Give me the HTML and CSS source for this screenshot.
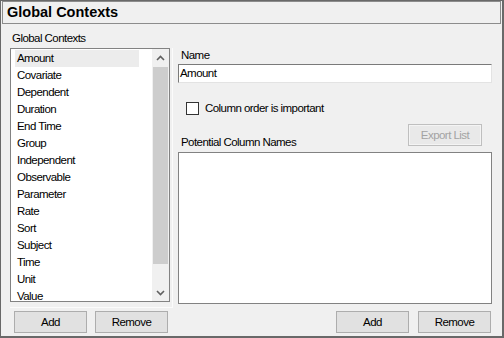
FILE: index.html
```html
<!DOCTYPE html>
<html>
<head>
<meta charset="utf-8">
<link rel="stylesheet" href="styles.css">
</head>
<body>
<div class="window">
  <div class="titlebar">Global Contexts</div>
  <div class="content">
    <div class="leftpane">
      <div class="label left-label">Global Contexts</div>
      <div class="listwrap">
        <div class="listbox">
          <div class="items">
            <div class="item selected">Amount</div>
            <div class="item">Covariate</div>
            <div class="item">Dependent</div>
            <div class="item">Duration</div>
            <div class="item">End Time</div>
            <div class="item">Group</div>
            <div class="item">Independent</div>
            <div class="item">Observable</div>
            <div class="item">Parameter</div>
            <div class="item">Rate</div>
            <div class="item">Sort</div>
            <div class="item">Subject</div>
            <div class="item">Time</div>
            <div class="item">Unit</div>
            <div class="item">Value</div>
          </div>
          <div class="scrollbar">
            <div class="arrow">
              <svg width="9" height="6" viewBox="0 0 9 6"><path d="M1 5 L4.5 1.5 L8 5" fill="none" stroke="#606060" stroke-width="1.6"/></svg>
            </div>
            <div class="track"><div class="thumb"></div></div>
            <div class="arrow">
              <svg width="9" height="6" viewBox="0 0 9 6"><path d="M1 1 L4.5 4.5 L8 1" fill="none" stroke="#606060" stroke-width="1.6"/></svg>
            </div>
          </div>
        </div>
      </div>
      <div class="buttons left-buttons">
        <div class="btn">Add</div>
        <div class="btn">Remove</div>
      </div>
    </div>
    <div class="rightpane">
      <div class="label name-label">Name</div>
      <div class="textbox">Amount</div>
      <div class="checkrow">
        <div class="checkbox"></div>
        <div class="checklabel">Column order is important</div>
      </div>
      <div class="exportrow">
        <div class="label pcn-label">Potential Column Names</div>
        <div class="btn disabled">Export List</div>
      </div>
      <div class="listbox2"></div>
      <div class="buttons right-buttons">
        <div class="btn">Add</div>
        <div class="btn">Remove</div>
      </div>
    </div>
  </div>
</div>
</body>
</html>
```
FILE: styles.css
```css
html, body {
  margin: 0;
  padding: 0;
  background: #f0f0f0;
}

.window {
  width: 504px;
  height: 338px;
  box-sizing: border-box;
  border-style: solid;
  border-color: #696969;
  border-width: 1px 2px 2px 1px;
  background: #f0f0f0;
  display: flex;
  flex-direction: column;
  font-family: "Liberation Sans", Arial, sans-serif;
  font-size: 11.5px;
  letter-spacing: -0.55px;
  color: #000;
}

.titlebar {
  height: 23px;
  box-sizing: border-box;
  margin: 0 1px 0 1px;
  border: 1px solid #8c8c8c;
  padding-left: 4px;
  font-weight: bold;
  font-size: 14.5px;
  letter-spacing: 0;
  line-height: 21px;
}

.content {
  flex: 1;
  display: flex;
  min-height: 0;
}

.label {
  line-height: 13px;
  white-space: nowrap;
}

.leftpane {
  width: 173px;
  box-sizing: border-box;
  padding-left: 9px;
  display: flex;
  flex-direction: column;
}

.left-label {
  padding-top: 8px;
  padding-left: 2px;
  margin-bottom: 3px;
}

.listwrap {
  flex: 1;
  width: 163px;
  box-sizing: border-box;
  padding: 0 2px 5px 0;
  border-right: 1px solid #fbfbfb;
  border-bottom: 1px solid #fbfbfb;
  display: flex;
  flex-direction: column;
  min-height: 0;
}

.listbox {
  flex: 1;
  border: 1px solid #828282;
  background: #fff;
  display: flex;
  overflow: hidden;
  min-height: 0;
}

.items {
  flex: 1;
  padding: 1px 0 0 4px;
  overflow: hidden;
}

.item {
  width: 122px;
  height: 17px;
  line-height: 17px;
  padding-left: 2px;
  white-space: nowrap;
}

.item.selected {
  background: #ececec;
}

.scrollbar {
  width: 17px;
  background: #f0f0f0;
  display: flex;
  flex-direction: column;
}

.arrow {
  height: 17px;
  display: flex;
  align-items: center;
  justify-content: center;
}

.track {
  flex: 1;
  padding: 1px 1px 0 1px;
  display: flex;
  flex-direction: column;
}

.thumb {
  height: 197px;
  background: #cdcdcd;
}

.buttons {
  display: flex;
  gap: 8px;
  margin-top: 3px;
  margin-bottom: 3px;
}

.left-buttons {
  padding-left: 4px;
}

.btn {
  width: 73px;
  height: 22px;
  box-sizing: border-box;
  border: 1px solid #adadad;
  background: #e1e1e1;
  text-align: center;
  line-height: 20px;
  white-space: nowrap;
}

.btn.disabled {
  width: 74px;
  border-color: #bfbfbf;
  background: #e9e9e9;
  color: #a3a3a3;
  box-shadow: inset 0 0 0 1px #f4f4f4;
}

.rightpane {
  flex: 1;
  box-sizing: border-box;
  padding: 0 10px 0 4px;
  display: flex;
  flex-direction: column;
  min-width: 0;
}

.name-label {
  margin-top: 25px;
  padding-left: 3px;
}

.textbox {
  margin-top: 2px;
  height: 19px;
  box-sizing: border-box;
  border-style: solid;
  border-width: 1px;
  border-color: #7a7a7a #e3e3e3 #e3e3e3 #7a7a7a;
  background: #fff;
  padding-left: 1px;
  line-height: 17px;
}

.checkrow {
  margin-top: 19px;
  height: 13px;
  display: flex;
  align-items: center;
  padding-left: 8px;
}

.checkbox {
  width: 13px;
  height: 13px;
  box-sizing: border-box;
  border: 1px solid #333;
  background: #fff;
}

.checklabel {
  margin-left: 6px;
  line-height: 13px;
  white-space: nowrap;
}

.exportrow {
  margin-top: 9px;
  height: 25px;
  display: flex;
  justify-content: space-between;
  align-items: flex-start;
  padding-right: 10px;
}

.pcn-label {
  align-self: flex-end;
  padding-left: 3px;
}

.listbox2 {
  margin-top: 3px;
  flex: 1;
  border: 1px solid #828282;
  background: #fff;
}

.right-buttons {
  justify-content: flex-end;
  gap: 9px;
  padding-right: 1px;
  margin-top: 7px;
}
```
